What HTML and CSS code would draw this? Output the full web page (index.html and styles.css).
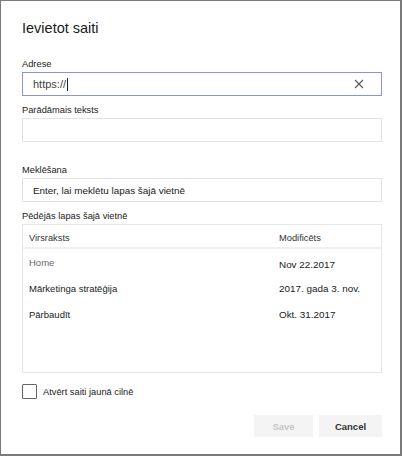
FILE: index.html
```html
<!DOCTYPE html>
<html lang="lv">
<head>
    <meta charset="UTF-8">
    <title>Ievietot saiti</title>
    <link rel="stylesheet" href="styles.css">
</head>
<body>
    <div class="dialog">
        <h1 class="title">Ievietot saiti</h1>

        <div class="field field-first">
            <label class="field-label">Adrese</label>
            <div class="input input-active">
                <span class="input-text">https://</span><span class="caret"></span>
                <svg class="clear-icon" width="10" height="10" viewBox="0 0 10 10">
                    <path d="M1 1 L9 9 M9 1 L1 9" stroke="#555" stroke-width="1.1" fill="none"/>
                </svg>
            </div>
        </div>

        <div class="field">
            <label class="field-label">Parādāmais teksts</label>
            <div class="input"></div>
        </div>

        <div class="field field-search">
            <label class="field-label">Meklēšana</label>
            <div class="input">
                <span class="search-text">Enter, lai meklētu lapas šajā vietnē</span>
            </div>
        </div>

        <div class="field">
            <label class="field-label">Pēdējās lapas šajā vietnē</label>
            <div class="pages">
                <div class="pages-head">
                    <span>Virsraksts</span>
                    <span>Modificēts</span>
                </div>
                <div class="pages-row row-muted">
                    <span class="page-title">Home</span>
                    <span class="page-date date-low">Nov 22.2017</span>
                </div>
                <div class="pages-row">
                    <span class="page-title">Mārketinga stratēģija</span>
                    <span class="page-date">2017. gada 3. nov.</span>
                </div>
                <div class="pages-row">
                    <span class="page-title">Pārbaudīt</span>
                    <span class="page-date">Okt. 31.2017</span>
                </div>
            </div>
        </div>

        <div class="check">
            <span class="check-box"></span>
            <span class="check-label">Atvērt saiti jaunā cilnē</span>
        </div>

        <div class="actions">
            <button class="btn btn-save" disabled>Save</button>
            <button class="btn btn-cancel">Cancel</button>
        </div>
    </div>
</body>
</html>
```

FILE: styles.css
```css
body {
    margin: 0;
    font-family: "Liberation Sans", Arial, sans-serif;
    background-color: white;
}

.dialog {
    width: 402px;
    height: 456px;
    box-sizing: border-box;
    border-top: 1px solid #7a7a7a;
    border-left: 1px solid #7a7a7a;
    border-right: 2px solid #7a7a7a;
    border-bottom: 2px solid #7a7a7a;
    padding: 18px 18px 0 21px;
    display: flex;
    flex-direction: column;
}

.title {
    margin: 0;
    font-size: 14.5px;
    line-height: 18px;
    font-weight: normal;
    color: #1a1a1a;
}

.field {
    margin-top: 8px;
}

.field-first {
    margin-top: 21px;
}

.field-search {
    margin-top: 22px;
}

.field-label {
    display: block;
    font-size: 9.3px;
    line-height: 12px;
    color: #222;
    margin-bottom: 2px;
}

.input {
    height: 24px;
    box-sizing: border-box;
    border: 1px solid #e3e3e3;
    display: flex;
    align-items: center;
    padding: 0 10px;
}

.input-active {
    border-color: #8e92d8;
}

.input-text {
    font-size: 11px;
    color: #444;
}

.caret {
    display: inline-block;
    width: 1px;
    height: 13px;
    background-color: #222;
    margin-left: 1px;
}

.clear-icon {
    margin-left: auto;
    margin-right: 7px;
}

.search-text {
    font-size: 9.9px;
    color: #1a1a1a;
}

.pages {
    margin-top: 1px;
    height: 149px;
    box-sizing: border-box;
    border: 1px solid #e6e6e6;
}

.pages-head,
.pages-row {
    display: grid;
    grid-template-columns: 250px 1fr;
    padding-left: 6px;
    align-items: center;
}

.pages-head {
    height: 24px;
    box-sizing: border-box;
    padding-top: 4px;
    border-bottom: 2px solid #f0f0f0;
    font-size: 9.3px;
    color: #333;
}

.pages-row {
    height: 25px;
    padding-top: 1px;
}

.page-title {
    font-size: 9.5px;
    color: #222;
}

.row-muted .page-title {
    color: #6a6a6a;
}

.page-date {
    font-size: 9.9px;
    color: #222;
}

.date-low {
    padding-top: 4px;
}

.check {
    margin-top: 11px;
    display: flex;
    align-items: center;
}

.check-box {
    width: 15px;
    height: 15px;
    box-sizing: border-box;
    border: 1px solid #666;
    border-radius: 1px;
}

.check-label {
    margin-left: 6px;
    font-size: 9.3px;
    color: #222;
}

.actions {
    margin-top: 16px;
    display: flex;
    justify-content: flex-end;
    gap: 6px;
}

.btn {
    height: 22px;
    border: none;
    background-color: #f4f4f4;
    font-family: "Liberation Sans", Arial, sans-serif;
    font-size: 9.5px;
    font-weight: bold;
    padding: 0;
}

.btn-save {
    width: 59px;
    color: #c6c6c6;
}

.btn-cancel {
    width: 63px;
    color: #333;
}
```
